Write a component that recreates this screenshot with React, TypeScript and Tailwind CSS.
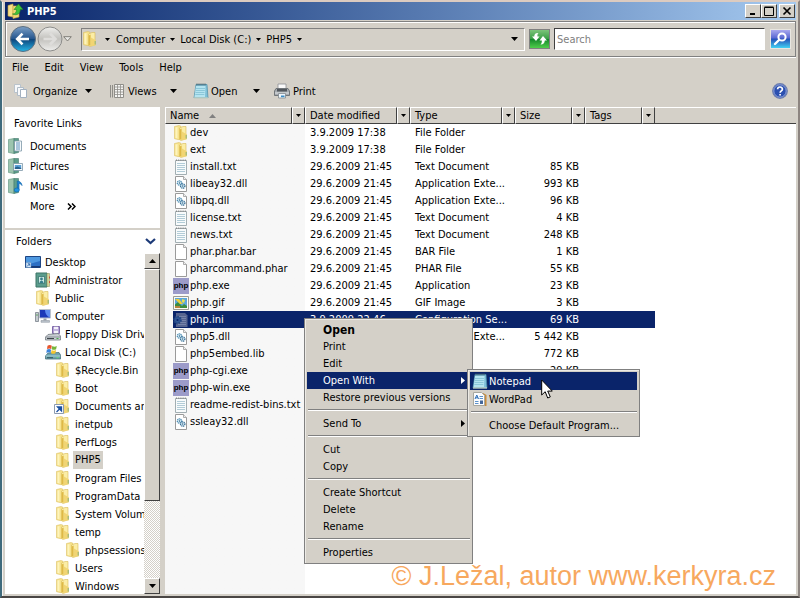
import { type ReactNode } from "react";

type FileKind = "folder" | "txt" | "dll" | "blank" | "exe" | "gif" | "ini";

type FileRow = {
  name: string;
  date: string;
  type: string;
  size?: string;
  kind: FileKind;
  selected?: boolean;
};

const files: FileRow[] = [
  { name: "dev", date: "3.9.2009 17:38", type: "File Folder", kind: "folder" },
  { name: "ext", date: "3.9.2009 17:38", type: "File Folder", kind: "folder" },
  { name: "install.txt", date: "29.6.2009 21:45", type: "Text Document", size: "85 KB", kind: "txt" },
  { name: "libeay32.dll", date: "29.6.2009 21:45", type: "Application Exte...", size: "993 KB", kind: "dll" },
  { name: "libpq.dll", date: "29.6.2009 21:45", type: "Application Exte...", size: "96 KB", kind: "dll" },
  { name: "license.txt", date: "29.6.2009 21:45", type: "Text Document", size: "4 KB", kind: "txt" },
  { name: "news.txt", date: "29.6.2009 21:45", type: "Text Document", size: "248 KB", kind: "txt" },
  { name: "phar.phar.bar", date: "29.6.2009 21:45", type: "BAR File", size: "1 KB", kind: "blank" },
  { name: "pharcommand.phar", date: "29.6.2009 21:45", type: "PHAR File", size: "55 KB", kind: "blank" },
  { name: "php.exe", date: "29.6.2009 21:45", type: "Application", size: "23 KB", kind: "exe" },
  { name: "php.gif", date: "29.6.2009 21:45", type: "GIF Image", size: "3 KB", kind: "gif" },
  { name: "php.ini", date: "3.9.2009 22:46", type: "Configuration Se...", size: "69 KB", kind: "ini", selected: true },
  { name: "php5.dll", date: "29.6.2009 21:45", type: "Application Exte...", size: "5 442 KB", kind: "dll" },
  { name: "php5embed.lib", date: "29.6.2009 21:45", type: "LIB File", size: "772 KB", kind: "blank" },
  { name: "php-cgi.exe", date: "29.6.2009 21:45", type: "Application", size: "29 KB", kind: "exe" },
  { name: "php-win.exe", date: "29.6.2009 21:45", type: "Application", size: "23 KB", kind: "exe" },
  { name: "readme-redist-bins.txt", date: "29.6.2009 21:45", type: "Text Document", size: "3 KB", kind: "txt" },
  { name: "ssleay32.dll", date: "29.6.2009 21:45", type: "Application Exte...", size: "197 KB", kind: "dll" },
];

const columns = [
  { label: "Name", width: "w-[140px]", sorted: true },
  { label: "Date modified", width: "w-[105px]" },
  { label: "Type", width: "w-[105px]" },
  { label: "Size", width: "w-[70px]" },
  { label: "Tags", width: "w-[70px]" },
];

const raised = "border border-t-white border-l-white border-r-[#404040] border-b-[#404040] bg-[#d4d0c8]";
const sunken = "border border-t-[#808080] border-l-[#808080] border-r-white border-b-white";

function Caret({ className = "" }: { className?: string }) {
  return (
    <svg width="7" height="4" viewBox="0 0 7 4" className={`shrink-0 ${className}`} fill="currentColor">
      <path d="M0 0h7L3.5 4z" />
    </svg>
  );
}

function FolderIcon() {
  return (
    <svg width="16" height="16" viewBox="0 0 16 16" className="shrink-0">
      <path d="M1.500 1.500 6 .5l2 .8v12.500l-2 .9-4.500-1z" fill="#f7e38c" stroke="#dcc063" strokeWidth=".6" />
      <path d="M2.500 2.500 4.500 2v11.500l-2-.5z" fill="#fdf4bd" />
      <path d="M6.500 3 10 1.500h3v12.300l-5 1.700-1.500-.8z" fill="#fbeda6" stroke="#d9bb55" strokeWidth=".6" />
      <path d="M6.600 4.500 8.600 3.500v11.300l-2-.6z" fill="#dfb945" />
      <path d="M9 6.500 14 9.500v4.700l-5 1z" fill="#f1d573" />
      <path d="M13.200 10v3.500" stroke="#7fae7f" strokeWidth=".9" />
    </svg>
  );
}

function Page({ children }: { children?: ReactNode }) {
  return (
    <svg width="16" height="16" viewBox="0 0 16 16" className="shrink-0">
      <path d="M2.500.5h8l3 3v12h-11z" fill="#fff" stroke="#9a9a9a" />
      <path d="M10.500.5v3h3" fill="#eee" stroke="#9a9a9a" strokeWidth=".8" />
      {children}
    </svg>
  );
}

function FileIcon({ kind }: { kind: FileKind }) {
  if (kind === "folder") return <FolderIcon />;
  if (kind === "txt") {
    return (
      <svg width="16" height="16" viewBox="0 0 16 16" className="shrink-0">
        <path d="M2.500 1.500h11v14h-11z" fill="#f8fbfc" stroke="#a2aeb2" />
        <path d="M3 1.200h10" stroke="#888" strokeWidth="1.400" strokeDasharray="1 1.200" />
        <path d="M4 4.500h8M4 6.500h8M4 8.500h8M4 10.500h8M4 12.500h8" stroke="#a9c6d2" strokeWidth=".9" />
      </svg>
    );
  }
  if (kind === "dll") {
    return (
      <Page>
        <circle cx="6.500" cy="7" r="2.200" fill="#d7ebf5" stroke="#4d8cb2" strokeWidth="1.300" strokeDasharray="1.200 .5" />
        <circle cx="9.700" cy="10" r="2.200" fill="#d7ebf5" stroke="#3a7096" strokeWidth="1.300" strokeDasharray="1.200 .5" />
        <circle cx="6.500" cy="7" r=".7" fill="#2f6387" />
        <circle cx="9.700" cy="10" r=".7" fill="#2f6387" />
      </Page>
    );
  }
  if (kind === "exe") {
    return (
      <span className="flex h-4 w-4 shrink-0 items-center justify-center overflow-hidden bg-[#9c9bc9] font-['Liberation_Sans',sans-serif] text-[8px] font-bold text-black">
        php
      </span>
    );
  }
  if (kind === "gif") {
    return (
      <svg width="16" height="16" viewBox="0 0 16 16" className="shrink-0">
        <path d="M.5 1.500h15v13H.5z" fill="#fafaf4" stroke="#9b9b90" />
        <path d="M2 3h12v10H2z" fill="#5ba6dc" />
        <path d="M2 9.500 5 7l4 4 2-2 3 2v2H2z" fill="#3c8d3b" />
        <path d="M2 4h4l4 5H7L4 6z" fill="#f0cf38" />
        <path d="M9 4l3 1-1 3-2-1z" fill="#e9e04b" />
        <path d="M2 11h5v2H2z" fill="#b7843c" />
      </svg>
    );
  }
  if (kind === "ini") {
    return (
      <svg width="16" height="16" viewBox="0 0 16 16" className="shrink-0">
        <path d="M3 1h9l2.500 2.500V15H3z" fill="#56648f" />
        <path d="M5 4.500h8M5 6.500h8M5 8.500h8M5 10.500h8M5 12.500h8" stroke="#8290b4" strokeWidth=".7" />
        <circle cx="4.500" cy="8" r="3.300" fill="#2f5796" stroke="#234683" strokeWidth="2" strokeDasharray="1.500 1" />
        <circle cx="4.500" cy="8" r="1.100" fill="#0a246a" />
      </svg>
    );
  }
  return <Page />;
}

function NotepadIcon() {
  return (
    <svg width="16" height="16" viewBox="0 0 16 16" className="shrink-0">
      <path d="M3 1.500h11l1 13.500H1z" fill="#7fc0d8" stroke="#4b8ca6" strokeWidth=".7" />
      <path d="M3 3h9.500L12 14H1.500z" fill="#b5e4f0" />
      <path d="M3 5.500h9M2.800 7.500h9M2.500 9.500h9M2.300 11.500h9" stroke="#6fb3c9" strokeWidth=".6" />
      <path d="M3.500 1.500h10" stroke="#49616b" strokeWidth="1.800" strokeDasharray="1 1" />
      <path d="M1 15h14" stroke="#e5e2c9" strokeWidth="1" />
    </svg>
  );
}

function WordPadIcon() {
  return (
    <svg width="16" height="16" viewBox="0 0 16 16" className="shrink-0">
      <path d="m11 2 3.500 2v11H6z" fill="#c58a3a" />
      <path d="M1.500 1.500h8l3 3v10h-11z" fill="#fbfcfe" stroke="#a8a79e" />
      <path d="m3 8 1.800-4L6.500 8M3.500 6.800H6" stroke="#2e6fb8" fill="none" />
      <path d="M7.500 5.500H11M7.500 7.500H11M3 10.500h3.500M3 12.500h3.500" stroke="#4a86c4" strokeWidth=".9" />
      <path d="M8 9.500h3v3.500H8z" fill="#43679c" />
    </svg>
  );
}

// green binder used by the user's own folders
function Binder({ children }: { children?: ReactNode }) {
  return (
    <svg width="16" height="16" viewBox="0 0 16 16" className="shrink-0">
      <path d="M.5 1.500 6 .5v15l-5.500-1z" fill="#9cc4ae" stroke="#6c9c88" strokeWidth=".7" />
      <path d="M6 .5h4.500v14L6 15.500z" fill="#5c9d8b" stroke="#44796b" strokeWidth=".6" />
      {children}
    </svg>
  );
}

function DocumentsIcon() {
  return (
    <Binder>
      <path d="M6.500 3h7v10h-7z" fill="#f6fafc" stroke="#7e97a7" strokeWidth=".8" />
      <path d="M8 5h4M8 7h4M8 9h4M8 11h4" stroke="#4d86b5" strokeWidth=".9" />
    </Binder>
  );
}

function PicturesIcon() {
  return (
    <Binder>
      <path d="M5.500 5.500h9v7h-9z" fill="#f6fafc" stroke="#7e97a7" strokeWidth=".8" />
      <path d="M6.800 7h6.400v4H6.800z" fill="#5aa0d6" />
      <path d="M6.800 11V9.500l2.500-1 3.900 1.500v1z" fill="#28618f" />
    </Binder>
  );
}

function MusicIcon() {
  return (
    <Binder>
      <path d="M9.300 11.500V3c2 0 4.500 1.500 4.700 4.500-1-1.500-2-2-3-2v6.300" fill="#1d86d4" stroke="#0f65ad" strokeWidth=".7" />
      <ellipse cx="8.800" cy="12" rx="2.600" ry="2" fill="#2094e0" stroke="#0f65ad" strokeWidth=".6" />
    </Binder>
  );
}

function DesktopIcon() {
  return (
    <svg width="16" height="16" viewBox="0 0 16 16" className="shrink-0">
      <path d="M.5 2.500h15v11H.5z" fill="#2c6fc4" stroke="#1d4583" />
      <path d="M1 3h14v4L1 11z" fill="#4e98e0" />
      <path d="M1 12h14v1.500H1z" fill="#173a77" />
      <path d="M1 8.500h5v5H1z" fill="#d9e9f7" stroke="#5b87b9" strokeWidth=".5" />
      <path d="M2 12.500 4.500 10M2.800 9.800h1.900v1.900" stroke="#2460a8" fill="none" strokeWidth=".9" />
    </svg>
  );
}

function UserIcon() {
  return (
    <svg width="16" height="16" viewBox="0 0 16 16" className="shrink-0">
      <path d="M1 1h11v14H1z" fill="#5b9c8c" stroke="#3c7566" />
      <path d="M12 1.500h2.500v13H12z" fill="#d8d49a" stroke="#8f9a66" strokeWidth=".6" />
      <path d="M3.500 4.500h6v7h-6z" fill="#cfe9e4" stroke="#2e6c66" strokeWidth=".7" />
      <circle cx="6.500" cy="7" r="1.400" fill="#367f8c" />
      <path d="M4.500 11c0-3 4-3 4 0z" fill="#367f8c" />
      <path d="M14.500 4.500v2M14.500 9v2" stroke="#c8553e" />
    </svg>
  );
}

function ComputerIcon() {
  return (
    <svg width="16" height="16" viewBox="0 0 16 16" className="shrink-0">
      <path d="M.5 4.500h3v9h-3z" fill="#c5cbd0" stroke="#7a828a" strokeWidth=".8" />
      <path d="M1.200 7h1.600" stroke="#4a9e4a" />
      <path d="M4.500 1.500h11v8.500h-11z" fill="#1c39b8" stroke="#b9c2ce" />
      <path d="M10 2h5v7.500c-3-1-5-4-5-7.500z" fill="#5f8df0" />
      <path d="M8.500 10.500h3v2h-3z" fill="#9aa3ad" />
      <path d="M6 12.500h8.500v1.800H6z" fill="#bcc4cc" stroke="#848d97" strokeWidth=".5" />
    </svg>
  );
}

function FloppyIcon() {
  return (
    <svg width="16" height="16" viewBox="0 0 16 16" className="shrink-0">
      <path d="M7.500.5h7v7h-7z" fill="#b5a3d6" stroke="#7e69a8" />
      <path d="M9 .8h4v2.500H9zM9 4.800h4v2.700H9z" fill="#f4f1fa" />
      <path d="m3 8.500 10-1 2.500 2.500v4H.5v-3z" fill="#c9ced3" stroke="#747b82" strokeWidth=".8" />
      <path d="M.8 11h14.500" stroke="#8a9198" />
      <path d="M2 12.500h7" stroke="#3d444b" />
      <path d="M11.500 12.500h2" stroke="#46b04c" />
    </svg>
  );
}

function DiskIcon() {
  return (
    <svg width="16" height="16" viewBox="0 0 16 16" className="shrink-0">
      <path d="m3 9 11-.5 1.500 2.500v4H.5v-3z" fill="#6ea3ad" stroke="#47707c" strokeWidth=".8" />
      <path d="M.8 12h14.500" stroke="#a8d2d8" />
      <path d="M2 13.700h6" stroke="#2f545f" />
      <path d="M11.500 13.700h2" stroke="#65e070" />
      <path d="M2.500 1.800c1.500-1 3-1 4.300 0L6.200 5C5 4.200 3.500 4.200 2 5z" fill="#e8562e" />
      <path d="M7.300 2c1.500 1 3 1 4.500 0l-.7 3.200c-1.400.8-2.900.8-4.400 0z" fill="#74b53a" />
      <path d="M1.800 5.700c1.500-1 3-1 4.300 0l-.6 3.200c-1.200-.8-2.700-.8-4.200 0z" fill="#3c85dc" />
      <path d="M6.600 6c1.500 1 3 1 4.500 0l-.7 3.200c-1.400.8-2.900.8-4.400 0z" fill="#f5c52e" />
    </svg>
  );
}

function ShortcutFolderIcon() {
  return (
    <span className="relative flex shrink-0">
      <FolderIcon />
      <svg width="10" height="10" viewBox="0 0 10 10" className="absolute -left-px bottom-0">
        <path d="M.5.5h9v9h-9z" fill="#fff" stroke="#8c9bb0" />
        <path d="M2.500 8 6 4.500M3.500 3h4v4z" stroke="#1a4fa0" fill="#1a4fa0" strokeWidth="1.300" />
      </svg>
    </span>
  );
}

const tree: { label: string; pad: string; icon: ReactNode; selected?: boolean }[] = [
  { label: "Desktop", pad: "pl-5", icon: <DesktopIcon /> },
  { label: "Administrator", pad: "pl-[30px]", icon: <UserIcon /> },
  { label: "Public", pad: "pl-[30px]", icon: <FolderIcon /> },
  { label: "Computer", pad: "pl-[30px]", icon: <ComputerIcon /> },
  { label: "Floppy Disk Drive (A:)", pad: "pl-10", icon: <FloppyIcon /> },
  { label: "Local Disk (C:)", pad: "pl-10", icon: <DiskIcon /> },
  { label: "$Recycle.Bin", pad: "pl-[50px]", icon: <FolderIcon /> },
  { label: "Boot", pad: "pl-[50px]", icon: <FolderIcon /> },
  { label: "Documents and Settings", pad: "pl-[50px]", icon: <ShortcutFolderIcon /> },
  { label: "inetpub", pad: "pl-[50px]", icon: <FolderIcon /> },
  { label: "PerfLogs", pad: "pl-[50px]", icon: <FolderIcon /> },
  { label: "PHP5", pad: "pl-[50px]", icon: <FolderIcon />, selected: true },
  { label: "Program Files", pad: "pl-[50px]", icon: <FolderIcon /> },
  { label: "ProgramData", pad: "pl-[50px]", icon: <FolderIcon /> },
  { label: "System Volume Information", pad: "pl-[50px]", icon: <FolderIcon /> },
  { label: "temp", pad: "pl-[50px]", icon: <FolderIcon /> },
  { label: "phpsessions", pad: "pl-[60px]", icon: <FolderIcon /> },
  { label: "Users", pad: "pl-[50px]", icon: <FolderIcon /> },
  { label: "Windows", pad: "pl-[50px]", icon: <FolderIcon /> },
];

function TitleBar() {
  const button = `flex h-[14px] w-4 items-center justify-center ${raised}`;
  return (
    <header className="flex h-[18px] shrink-0 items-center bg-linear-to-r from-[#0a246a] to-[#a6caf0] pr-px pl-[2px]">
      <svg width="16" height="16" viewBox="0 0 16 16">
        <path d="M1 2.500 6 1v13l-5-1z" fill="#f6e08a" stroke="#c8a63c" strokeWidth=".6" />
        <path d="M6 3h6v11l-6 1.500z" fill="#f1d676" stroke="#c8a63c" strokeWidth=".6" />
        <path d="M5.500 11c3 0 4-2 4-4.500H7L11.500 1 16 6.500h-2.700c0 4-3 6.500-7.800 4.500z" fill="#3fc23a" stroke="#1f8420" strokeWidth=".6" />
      </svg>
      <h1 className="ml-1 flex-1 text-[11px] font-bold text-white">PHP5</h1>
      <button type="button" aria-label="Minimize" className={button}>
        <svg width="10" height="10" viewBox="0 0 10 10"><path d="M2 8h5" stroke="#000" strokeWidth="2" /></svg>
      </button>
      <button type="button" aria-label="Maximize" className={button}>
        <svg width="10" height="10" viewBox="0 0 10 10"><path d="M.5 1.500h9v8h-9zM.5 1h9" stroke="#000" fill="none" /></svg>
      </button>
      <button type="button" aria-label="Close" className={`ml-[2px] ${button}`}>
        <svg width="10" height="10" viewBox="0 0 10 10"><path d="m1.500 1.500 7 7m0-7-7 7" stroke="#000" strokeWidth="1.700" /></svg>
      </button>
    </header>
  );
}

function Crumb({ children }: { children: string }) {
  return (
    <button type="button" className="flex items-center gap-[5px]">
      {children}
      <Caret className="h-[3px] w-[5px]" />
    </button>
  );
}

function NavBar() {
  return (
    <div className="mt-px flex h-9 shrink-0 items-center border border-[#808080] pr-1 pl-[3px] shadow-[inset_1px_1px_0_#fff,0_1px_0_#fff]">
      <div className="flex items-center">
        <button type="button" aria-label="Back">
          <svg width="28" height="28" viewBox="0 0 28 28">
            <defs>
              <linearGradient id="back" x1="0" y1="0" x2="0" y2="1">
                <stop offset="0" stopColor="#7b9fc6" />
                <stop offset=".48" stopColor="#27578f" />
                <stop offset=".5" stopColor="#0d4279" />
                <stop offset="1" stopColor="#24b5e6" />
              </linearGradient>
            </defs>
            <circle cx="14" cy="14" r="12.500" fill="url(#back)" stroke="#5d6f80" />
            <path d="M20 14H8.500M13.500 8.700 8.200 14l5.300 5.300" stroke="#fff" strokeWidth="2.600" fill="none" />
          </svg>
        </button>
        <button type="button" aria-label="Forward">
          <svg width="26" height="28" viewBox="0 0 26 28">
            <defs>
              <linearGradient id="forward" x1="0" y1="0" x2="0" y2="1">
                <stop offset="0" stopColor="#efefed" />
                <stop offset=".5" stopColor="#c2c1bd" />
                <stop offset="1" stopColor="#eeeeec" />
              </linearGradient>
            </defs>
            <circle cx="13" cy="14" r="12" fill="url(#forward)" stroke="#8d8d8b" />
            <path d="M6.500 14h12M13 8.500l5.500 5.500-5.500 5.500" stroke="#dedddb" strokeWidth="2.600" fill="none" />
          </svg>
        </button>
        <button type="button" aria-label="Recent pages">
          <svg width="9" height="6" viewBox="0 0 9 6"><path d="M.7.7h7.600L4.500 5z" fill="#e9e8e5" stroke="#77756f" strokeWidth=".9" /></svg>
        </button>
      </div>
      <nav aria-label="Address" className={`ml-[9px] flex h-[23px] flex-1 items-center ${sunken}`}>
        <FolderIcon />
        <Caret className="ml-[7px] h-[3px] w-[5px]" />
        <div className="ml-[6px] flex flex-1 items-center gap-[5px]">
          <Crumb>Computer</Crumb>
          <Crumb>Local Disk (C:)</Crumb>
          <Crumb>PHP5</Crumb>
        </div>
        <button type="button" aria-label="Previous locations" className="px-[6px]">
          <Caret />
        </button>
      </nav>
      <button type="button" aria-label="Refresh" className="ml-1 border border-[#808080]">
        <svg width="19" height="18" viewBox="0 0 19 18">
          <defs>
            <linearGradient id="refresh" x1="0" y1="0" x2="0" y2="1">
              <stop offset="0" stopColor="#7cc47a" />
              <stop offset=".48" stopColor="#3ba046" />
              <stop offset=".5" stopColor="#13862a" />
              <stop offset="1" stopColor="#4fce4b" />
            </linearGradient>
          </defs>
          <path d="M0 0h19v18H0z" fill="url(#refresh)" />
          <path d="M8.500 3 6 3.200C4.500 4 4.300 5 4.300 6.500H2l4 4.500 3.500-4.500h-2C7.300 5 7.500 4 8.500 3z" fill="#fff" />
          <path d="M10.500 14.500c2 .3 4.300-.8 4.300-4H17L13 6 9.500 10.500h2.300c.1 2-.3 3-1.300 4z" fill="#fff" />
        </svg>
      </button>
      <input
        type="text"
        aria-label="Search"
        placeholder="Search"
        className="ml-1 h-[22px] w-[211px] border border-t-[#404040] border-r-white border-b-white border-l-[#404040] bg-white px-[2px] text-[11px] outline-none placeholder:text-[#808080]"
      />
      <button type="button" aria-label="Start search" className="ml-[5px] border border-[#e8e6e0]">
        <svg width="19" height="18" viewBox="0 0 19 18">
          <defs>
            <linearGradient id="find" x1="0" y1="0" x2="0" y2="1">
              <stop offset="0" stopColor="#a9a8ee" />
              <stop offset=".45" stopColor="#5867d2" />
              <stop offset=".5" stopColor="#2450b8" />
              <stop offset="1" stopColor="#42d1f4" />
            </linearGradient>
          </defs>
          <path d="M0 0h19v18H0z" fill="url(#find)" />
          <circle cx="11" cy="7" r="3.600" fill="none" stroke="#fff" strokeWidth="2" />
          <path d="m8 10-4 4" stroke="#fff" strokeWidth="2.400" strokeLinecap="round" />
        </svg>
      </button>
    </div>
  );
}

function Toolbar() {
  return (
    <div className="flex h-[26px] shrink-0 items-center px-2">
      <button type="button" className="flex w-[97px] items-center gap-1">
        <svg width="16" height="16" viewBox="0 0 16 16">
          <path d="M1.500 1.500h6v8h-6z" fill="#f7f9fb" stroke="#b9c3cc" />
          <path d="M4.500 4.500h6v8h-6z" fill="#f7f9fb" stroke="#b0bcc8" />
          <path d="M7.500 6.500h6v8h-6z" fill="#fff" stroke="#a3b1c0" />
        </svg>
        <span className="w-[44px] text-left">Organize</span>
        <Caret className="ml-1" />
      </button>
      <button type="button" className="flex w-[83px] items-center gap-[2px]">
        <svg width="16" height="16" viewBox="0 0 16 16">
          <path d="M.5 2v12.500M2.500 2v12.500" stroke="#8e8d88" />
          <path d="M4.500 1.500h9v13h-9z" fill="#f5f5f3" stroke="#8f8e89" />
          <path d="M4.500 4h9M4.500 6.500h9M4.500 9h9M4.500 11.500h9M7.500 1.500v13M10.500 1.500v13" stroke="#8f8e89" strokeWidth=".8" />
        </svg>
        <span className="w-9 text-left">Views</span>
        <Caret className="ml-1" />
      </button>
      <button type="button" className="flex w-[81px] items-center gap-[2px]">
        <NotepadIcon />
        <span className="w-9 text-left">Open</span>
        <Caret className="ml-1" />
      </button>
      <button type="button" className="flex items-center gap-[3px]">
        <svg width="16" height="16" viewBox="0 0 16 16">
          <path d="M4 1h8v5H4z" fill="#fafafa" stroke="#8d9196" strokeWidth=".8" />
          <path d="M2 5.500h12l1.500 2.500v4.500H.5V8z" fill="#a6abb0" stroke="#5e6469" strokeWidth=".8" />
          <path d="M3 6h10v2.500H3z" fill="#51575d" />
          <path d="M1 10h14" stroke="#e3e6e9" />
          <path d="M4.500 10.500h7v4.500h-7z" fill="#eef6fb" stroke="#767e85" strokeWidth=".7" />
          <path d="M7 12.500h3.500v1.700H7z" fill="#3c8dc6" />
        </svg>
        Print
      </button>
      <button type="button" aria-label="Help" className="ml-auto">
        <svg width="16" height="16" viewBox="0 0 16 16">
          <circle cx="8" cy="8" r="7.300" fill="#2c50b0" stroke="#6f7fae" strokeWidth="1.200" />
          <circle cx="8" cy="8" r="6.200" fill="none" stroke="#b6c3ea" strokeWidth=".7" />
          <path d="M5.600 6.200c.1-3 4.900-2.800 4.800 0 0 1.600-2.300 1.700-2.300 3.500M8.100 10.900v1.700" stroke="#fff" strokeWidth="1.700" fill="none" />
        </svg>
      </button>
    </div>
  );
}

function Favorites() {
  return (
    <section className="h-[121px] shrink-0 bg-white pt-2">
      <h2 className="mb-[3px] pl-[9px] leading-[18px]">Favorite Links</h2>
      <ul>
        {[
          { label: "Documents", icon: <DocumentsIcon /> },
          { label: "Pictures", icon: <PicturesIcon /> },
          { label: "Music", icon: <MusicIcon /> },
        ].map((link) => (
          <li key={link.label}>
            <a href="#" className="flex h-5 items-center gap-[6px] pl-[3px]">
              {link.icon}
              {link.label}
            </a>
          </li>
        ))}
      </ul>
      <button type="button" className="flex h-5 items-center gap-3 pl-[25px]">
        More
        <svg width="9" height="7" viewBox="0 0 9 7"><path d="m1 .5 3 3-3 3m4-6 3 3-3 3" stroke="#000" strokeWidth="1.500" fill="none" /></svg>
      </button>
    </section>
  );
}

function FolderTree() {
  return (
    <section className="mt-[2px] flex min-h-0 flex-1 flex-col bg-white">
      <button type="button" className="flex h-[23px] shrink-0 items-center justify-between pr-1 pl-[11px]">
        Folders
        <svg width="11" height="7" viewBox="0 0 11 7"><path d="m1 1 4.500 4L10 1" stroke="#1c3a78" strokeWidth="2.200" fill="none" /></svg>
      </button>
      <div className="flex min-h-0 flex-1">
        <ul className="flex-1 overflow-hidden">
          {tree.map((node) => (
            <li key={node.label} className={node.pad}>
              <a href="#" className="flex h-[18px] items-center gap-[2px] whitespace-nowrap">
                {node.icon}
                <span className={node.selected ? "bg-[#d4d0c8] px-[2px] leading-[18px]" : "px-[2px]"}>{node.label}</span>
              </a>
            </li>
          ))}
        </ul>
        <div className="flex w-4 shrink-0 flex-col bg-[repeating-conic-gradient(#d4d0c8_0_25%,#fff_0_50%)] bg-[length:2px_2px]">
          <button type="button" aria-label="Scroll up" className={`flex h-4 items-center justify-center ${raised}`}>
            <Caret className="rotate-180" />
          </button>
          <div className={`h-[68%] ${raised}`} />
          <button type="button" aria-label="Scroll down" className={`mt-auto flex h-4 items-center justify-center ${raised}`}>
            <Caret />
          </button>
        </div>
      </div>
    </section>
  );
}

function FileTable() {
  return (
    <main className="min-w-0 flex-1 overflow-hidden bg-white bg-linear-to-r from-[#f7f7f7] from-[140px] to-white to-[140px]">
      <div className="bg-[linear-gradient(#fff_1px,#d4d0c8_1px_16px,#404040_16px_17px,transparent_17px)]">
        <table className="w-[490px] table-fixed border-collapse">
          <thead>
            <tr>
              {columns.map((column) => (
                <th key={column.label} className={`p-0 font-normal ${column.width}`}>
                  <div className="flex h-[17px]">
                    <button type="button" className={`flex min-w-0 flex-1 items-center gap-[10px] pl-1 whitespace-nowrap ${raised}`}>
                      {column.label}
                      {column.sorted && <Caret className="rotate-180 text-[#808080]" />}
                    </button>
                    <button type="button" aria-label={`Filter by ${column.label}`} className={`flex w-[13px] items-center justify-center ${raised}`}>
                      <Caret className="h-[3px] w-[5px]" />
                    </button>
                  </div>
                </th>
              ))}
            </tr>
          </thead>
          <tbody>
            {files.map((file) => {
              const fill = file.selected ? "bg-[#0a246a] text-white" : "";
              return (
                <tr key={file.name} className="h-[17px] whitespace-nowrap">
                  <td className="p-0 pl-2">
                    <div className={`flex h-[17px] items-center gap-px ${fill}`}>
                      <FileIcon kind={file.kind} />
                      {file.name}
                    </div>
                  </td>
                  <td className={`p-0 pl-[5px] ${fill}`}>{file.date}</td>
                  <td className={`p-0 pl-[5px] ${fill}`}>{file.type}</td>
                  <td className={`p-0 pr-[6px] text-right ${fill}`}>{file.size}</td>
                  <td className={`p-0 ${fill}`} />
                </tr>
              );
            })}
          </tbody>
        </table>
      </div>
    </main>
  );
}

function MenuItem({ children, icon, active, bold, submenu, tall, gutter = "w-4" }: {
  children: string;
  icon?: ReactNode;
  active?: boolean;
  bold?: boolean;
  submenu?: boolean;
  tall?: boolean;
  gutter?: string;
}) {
  return (
    <button
      type="button"
      role="menuitem"
      className={`flex w-full items-center whitespace-nowrap pr-[5px] ${tall ? "h-[18px]" : "h-[17px]"} ${active ? "bg-[#0a246a] text-white" : ""} ${bold ? "text-xs font-bold" : ""}`}
    >
      <span className={`flex shrink-0 justify-center ${gutter}`}>{icon}</span>
      {children}
      {submenu && (
        <svg width="4" height="7" viewBox="0 0 4 7" className="ml-auto" fill="currentColor"><path d="M0 0v7l4-3.500z" /></svg>
      )}
    </button>
  );
}

function Divider() {
  return <div role="separator" className="mt-[3px] mb-1 ml-px h-[2px] border-t border-b border-t-[#808080] border-b-white" />;
}

const menuFrame = "absolute border border-[#808080] bg-[#d4d0c8] p-[2px] shadow-[inset_1px_1px_0_#eceae5]";

function ContextMenu() {
  return (
    <div role="menu" className={`top-[316px] left-[302px] w-[169px] ${menuFrame}`}>
      <MenuItem bold>Open</MenuItem>
      <MenuItem>Print</MenuItem>
      <MenuItem>Edit</MenuItem>
      <MenuItem active submenu>Open With</MenuItem>
      <MenuItem>Restore previous versions</MenuItem>
      <Divider />
      <MenuItem submenu>Send To</MenuItem>
      <Divider />
      <MenuItem>Cut</MenuItem>
      <MenuItem>Copy</MenuItem>
      <Divider />
      <MenuItem>Create Shortcut</MenuItem>
      <MenuItem>Delete</MenuItem>
      <MenuItem>Rename</MenuItem>
      <Divider />
      <MenuItem>Properties</MenuItem>
    </div>
  );
}

function OpenWithMenu() {
  return (
    <div role="menu" className={`top-[367px] left-[465px] w-[173px] ${menuFrame}`}>
      <MenuItem icon={<NotepadIcon />} gutter="w-[19px]" tall active>Notepad</MenuItem>
      <MenuItem icon={<WordPadIcon />} gutter="w-[19px]" tall>WordPad</MenuItem>
      <Divider />
      <MenuItem gutter="w-[19px]">Choose Default Program...</MenuItem>
    </div>
  );
}

export default function App() {
  return (
    <div className="relative flex h-screen flex-col overflow-hidden border-t-2 border-r-2 border-b-2 border-l-2 border-t-[#dccbc0] border-r-[#8c8480] border-b-[#4a4644] border-l-[#3f6a7c] bg-[#d4d0c8] font-['DejaVu_Sans_Condensed','Noto_Sans',sans-serif] text-[11px] leading-[17px] text-black">
      <div className="flex min-h-0 flex-1 flex-col border-l border-[#f4f1ee] pr-[2px] pb-[2px] pl-[2px]">
        <TitleBar />
        <NavBar />
        <nav aria-label="Menu" className="flex h-[21px] shrink-0 items-center gap-4 pl-[7px]">
          <button type="button">File</button>
          <button type="button">Edit</button>
          <button type="button">View</button>
          <button type="button">Tools</button>
          <button type="button">Help</button>
        </nav>
        <Toolbar />
        <div className="mt-[3px] flex min-h-0 flex-1 gap-[5px]">
          <aside className="flex w-[155px] shrink-0 flex-col">
            <Favorites />
            <FolderTree />
          </aside>
          <FileTable />
        </div>
      </div>
      <ContextMenu />
      <OpenWithMenu />
      <svg width="12" height="20" viewBox="0 0 12 20" className="absolute top-[377px] left-[539px]">
        <path d="M.7 1v15l3.500-3.300L6.700 19l2.600-1.100-2.600-5.800h4.600z" fill="#fff" stroke="#000" />
      </svg>
      <p className="absolute right-[22px] bottom-1 font-['Liberation_Sans',sans-serif] text-[27px] leading-8 whitespace-nowrap text-[#f7a85e]">
        © J.Ležal, autor www.kerkyra.cz
      </p>
    </div>
  );
}
